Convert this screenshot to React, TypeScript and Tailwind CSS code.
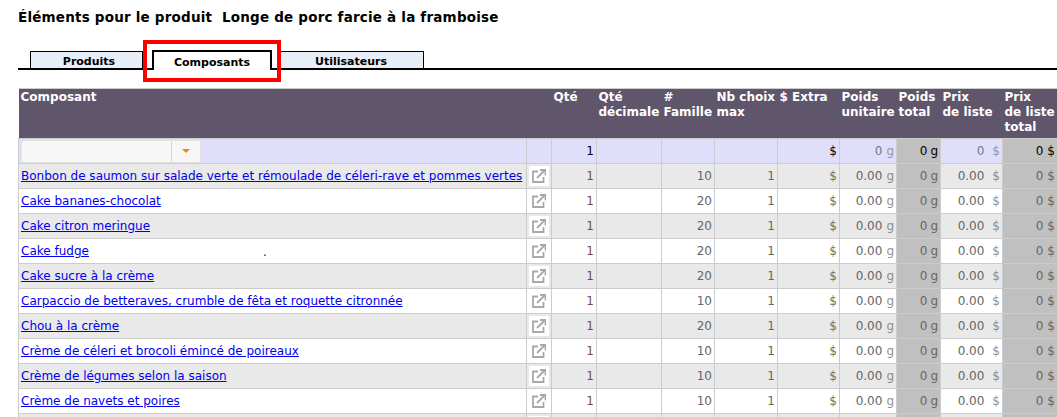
const rows = [
  { name: 'Bonbon de saumon sur salade verte et rémoulade de céleri-rave et pommes vertes', fam: 10 },
  { name: 'Cake bananes-chocolat', fam: 20 },
  { name: 'Cake citron meringue', fam: 20 },
  { name: 'Cake fudge', fam: 20, dot: true },
  { name: 'Cake sucre à la crème', fam: 20 },
  { name: 'Carpaccio de betteraves, crumble de fêta et roquette citronnée', fam: 10 },
  { name: 'Chou à la crème', fam: 20 },
  { name: 'Crème de céleri et brocoli émincé de poireaux', fam: 10 },
  { name: 'Crème de légumes selon la saison', fam: 10 },
  { name: 'Crème de navets et poires', fam: 10 },
]

const cols = [508, 25, 45, 65, 53, 63, 62, 57, 44, 62, 55]

function OpenIcon() {
  return (
    <svg width="14" height="14" viewBox="0 0 14 14" fill="none" stroke="#a8a8a8" strokeWidth="1.8" className="block">
      <path d="M6 2.5H1V13h10.5V8" />
      <path d="M5 9L12.5 1.5" />
      <path d="M8 1h5.5v5.5" />
    </svg>
  )
}

function Unit({ value, unit, gap }: { value: string | number; unit: string; gap: string }) {
  return (
    <span className={`flex justify-end ${gap}`}>
      <span>{value}</span>
      <span className="opacity-70">{unit}</span>
    </span>
  )
}

export default function App() {
  const td = 'border border-[#cccccc] h-[25px] p-0 pr-[2px] text-right align-middle'
  const th = 'border-0 p-0 pl-[2px] pt-[1px] align-top text-left font-bold leading-[15px]'
  return (
    <div className="relative w-[1057px] h-[417px] overflow-hidden bg-white text-[12px] text-black font-['DejaVu_Sans','Liberation_Sans',sans-serif]">
      <h1 className="pl-[18px] pt-[9px] text-[13.5px] leading-[17px] font-bold tracking-[0.2px] whitespace-pre">
        Éléments pour le produit  Longe de porc farcie à la framboise
      </h1>

      <div className="mt-[24px] ml-[18px] flex items-end h-[18px] border-b-2 border-black box-content">
        <div className="ml-[12px] w-[113px] h-[17px] pl-[5px] border border-b-0 border-black bg-[#e8eef7] text-center text-[11px] font-bold leading-[19px]">Produits</div>
        <div className="relative z-10 ml-[9px] w-[120px] h-[20px] -mb-[2px] border-2 border-b-0 border-black bg-white text-center text-[11px] font-bold leading-[21px]">Composants</div>
        <div className="ml-[6px] w-[146px] h-[17px] border border-b-0 border-black bg-[#e8eef7] text-center text-[11px] font-bold leading-[19px]">Utilisateurs</div>
      </div>

      <div className="absolute left-[143px] top-[40px] z-20 w-[138px] h-[42px] border-[4px] border-[#ff0000]" />

      <table className="mt-[18px] ml-[18px] border-collapse table-fixed w-[1039px] border-t border-[#cccccc]">
        <colgroup>
          {cols.map((c, i) => (
            <col key={i} style={{ width: c }} />
          ))}
        </colgroup>
        <thead>
          <tr className="h-[50px] bg-[#5f566b] text-white">
            <th className={th}>Composant</th>
            <th className={th}></th>
            <th className={th}>Qté</th>
            <th className={th}>Qté<br />décimale</th>
            <th className={th}>#<br />Famille</th>
            <th className={th}>Nb choix<br />max</th>
            <th className={th}>$ Extra</th>
            <th className={th}>Poids<br />unitaire</th>
            <th className={th}>Poids<br />total</th>
            <th className={th}>Prix<br />de liste</th>
            <th className={th}>Prix<br />de liste<br />total</th>
          </tr>
        </thead>
        <tbody>
          <tr className="bg-[#dfdffc]">
            <td className="border border-[#cccccc] h-[25px] p-0 pl-[2px] align-middle">
              <div className="flex w-[180px] h-[23px] rounded-[3px] border border-[#e3e3e3] bg-[#f7f7f7]">
                <div className="flex-1" />
                <div className="flex w-[29px] items-center justify-center border-l border-[#d5d5d5]">
                  <div className="w-0 h-0 border-x-[4px] border-t-[4px] border-x-transparent border-t-[#f08c00]" />
                </div>
              </div>
            </td>
            <td className={td}></td>
            <td className={td}>1</td>
            <td className={td}></td>
            <td className={td}></td>
            <td className={td}></td>
            <td className={td}>$</td>
            <td className={`${td} text-[#777777]`}><Unit value={0} unit="g" gap="gap-[4px]" /></td>
            <td className={`${td} bg-[#c0c0c0] text-black`}><span className="flex justify-end gap-[3px]"><span>0</span><span>g</span></span></td>
            <td className={`${td} text-[#777777]`}><Unit value={0} unit="$" gap="gap-[8px]" /></td>
            <td className={`${td} bg-[#c0c0c0] text-black`}><span className="flex justify-end gap-[4px]"><span>0</span><span>$</span></span></td>
          </tr>
          {rows.map((r, i) => {
            const bg = i % 2 === 0 ? 'bg-[#e9e9e9]' : 'bg-white'
            return (
              <tr key={i} className={bg}>
                <td className="relative border border-[#cccccc] h-[25px] p-0 pl-[2px] align-middle whitespace-nowrap overflow-hidden">
                  <a href="#" className="text-[#0000ee] underline">{r.name}</a>
                  {r.dot && <span className="absolute left-[244px] top-[4px] text-[#0000ee]">.</span>}
                </td>
                <td className="border border-[#cccccc] p-0 align-middle">
                  <div className="mx-auto flex w-[20px] h-[20px] items-center justify-center bg-white">
                    <OpenIcon />
                  </div>
                </td>
                <td className={`${td} text-[#7a4a4a]`}>1</td>
                <td className={td}></td>
                <td className={`${td} text-[#666666]`}>{r.fam}</td>
                <td className={`${td} text-[#666666]`}>1</td>
                <td className={`${td} text-[#667766]`}>$</td>
                <td className={`${td} text-[#666666]`}><Unit value="0.00" unit="g" gap="gap-[4px]" /></td>
                <td className={`${td} bg-[#c0c0c0] text-[#666666]`}><span className="flex justify-end gap-[3px]"><span>0</span><span>g</span></span></td>
                <td className={`${td} text-[#666666]`}><Unit value="0.00" unit="$" gap="gap-[8px]" /></td>
                <td className={`${td} bg-[#c0c0c0] text-[#666666]`}><span className="flex justify-end gap-[4px]"><span>0</span><span>$</span></span></td>
              </tr>
            )
          })}
          {/* next row starts at the bottom of the window, only its top shows */}
          <tr className="bg-[#e9e9e9]">
            {cols.map((_, i) => (
              <td key={i} className={`border border-[#cccccc] h-[25px] p-0 align-top ${i === 8 || i === 10 ? 'bg-[#c0c0c0]' : ''}`}>
                {i === 1 && <div className="mx-auto mt-[2px] w-[20px] h-[20px] bg-white" />}
              </td>
            ))}
          </tr>
        </tbody>
      </table>
    </div>
  )
}
